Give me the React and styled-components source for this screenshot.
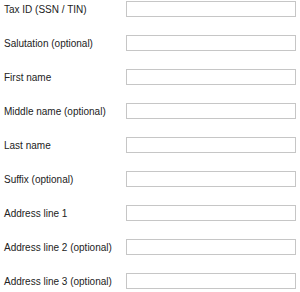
import React from "react";
import styled, { createGlobalStyle } from "styled-components";

const GlobalStyle = createGlobalStyle`
  body {
    margin: 0;
    background: #ffffff;
    font-family: "Liberation Sans", Arial, sans-serif;
  }
`;

const Form = styled.form`
  display: flex;
  flex-direction: column;
  gap: 18px;
  padding: 1px 4px 0 4px;
`;

const Row = styled.div`
  display: flex;
  align-items: center;
  height: 16px;
`;

const Label = styled.label`
  width: 122px;
  font-size: 10px;
  color: #222222;
  white-space: nowrap;
`;

const Input = styled.input`
  box-sizing: border-box;
  width: 170px;
  height: 16px;
  margin: 0;
  padding: 0 3px;
  border: 1px solid #c6c6c6;
  border-radius: 0;
  background: #ffffff;
  font-size: 10px;
  outline: none;
`;

const fields = [
  "Tax ID (SSN / TIN)",
  "Salutation (optional)",
  "First name",
  "Middle name (optional)",
  "Last name",
  "Suffix (optional)",
  "Address line 1",
  "Address line 2 (optional)",
  "Address line 3 (optional)",
];

const App = () => {
  return (
    <>
      <GlobalStyle />
      <Form>
        {fields.map((f, i) => (
          <Row key={f}>
            <Label htmlFor={"f" + i}>{f}</Label>
            <Input id={"f" + i} type="text" />
          </Row>
        ))}
      </Form>
    </>
  );
};

export default App;
